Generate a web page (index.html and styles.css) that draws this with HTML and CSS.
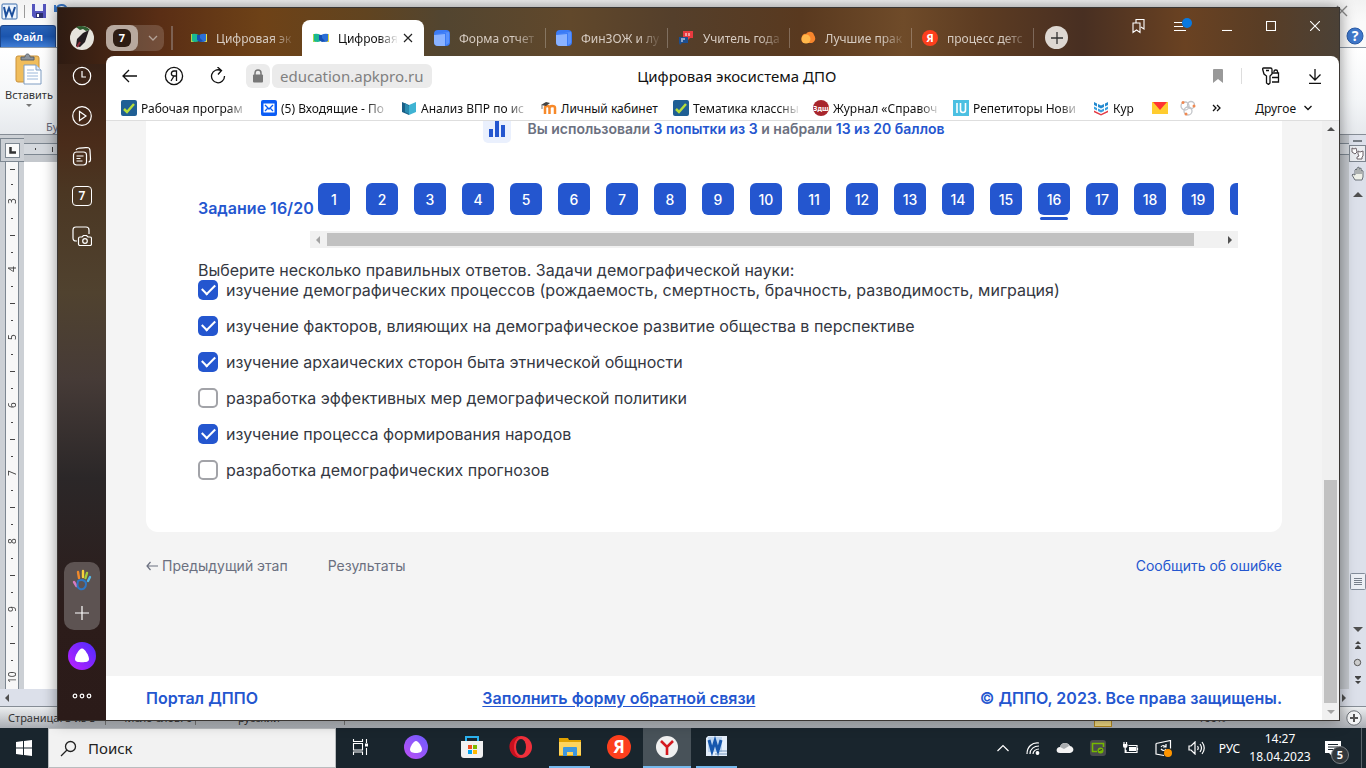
FILE: index.html
```html
<!DOCTYPE html>
<html lang="ru">
<head>
<meta charset="utf-8">
<title>Цифровая экосистема ДПО</title>
<link rel="stylesheet" href="styles.css">
</head>
<body>
<div class="desktop">
  <div class="workspace">
    <section class="word">
      <div class="word-title">
        <svg width="17" height="17" viewBox="0 0 17 17"><rect x="1" y="1" width="15" height="15" rx="1" fill="#eef5fd" stroke="#3a6cab"/><path d="M3 4l2 9 3-8 3 8 3-9" fill="none" stroke="#1c4f9c" stroke-width="2"/></svg>
        <i class="word-sep"></i>
        <svg width="16" height="16" viewBox="0 0 16 16"><path d="M1 1h14v14H3l-2-2z" fill="#5354bd"/><path d="M4 1h8v7H4z" fill="#eef0fa"/><path d="M5 10h7v5H5z" fill="#2c2f6d"/><path d="M6 11h2v3H6z" fill="#fff"/></svg>
        <svg class="word-undo" width="16" height="16" viewBox="0 0 16 16"><path d="M2 2v6h6M3 7c1-6 9-7 11-1" fill="none" stroke="#3a78c8" stroke-width="2"/></svg>
        <svg class="word-close" width="14" height="14" viewBox="0 0 14 14"><path d="M2 2l10 10M12 2L2 12" stroke="#888" stroke-width="1.4"/></svg>
      </div>
      <div class="word-tabs">
        <button class="word-file">Файл</button>
        <svg width="18" height="18" viewBox="0 0 18 18"><circle cx="9" cy="9" r="8" fill="#3f78cb" stroke="#2a5ba6"/><text x="9" y="14" text-anchor="middle" class="help-mark">?</text></svg>
      </div>
      <div class="word-ribbon">
        <button class="paste">
          <svg width="28" height="32" viewBox="0 0 28 32"><rect x="1" y="3" width="23" height="26" rx="2" fill="#f0bd5c" stroke="#c9913a"/><path d="M6 7V4h4c0-4 5-4 5 0h4v3z" fill="#8c949d" stroke="#59616b"/><path d="M9 12h12l5 5v14H9z" fill="#fff" stroke="#7f9dc2"/><path d="M21 12v5h5" fill="#dbe8f6" stroke="#7f9dc2"/><path d="M12 17h7M12 20h11M12 23h11M12 26h11" stroke="#9cb8db"/></svg>
          <span>Вставить</span>
          <i class="tri-down"></i>
        </button>
        <span class="ribbon-group">Буфер</span>
      </div>
      <div class="word-doc">
        <div class="doc-left">
          <div class="ruler-corner"><span><svg width="8" height="8" viewBox="0 0 8 8"><path d="M1.500 1v5.500H7" fill="none" stroke="#333" stroke-width="2.500"/></svg></span></div>
          <div class="ruler-v">
            <i class="ln first"></i><i class="dt"></i><b>3</b><i class="dt"></i><i class="ln"></i><i class="dt"></i><b>4</b><i class="dt"></i><i class="ln"></i><i class="dt"></i><b>5</b><i class="dt"></i><i class="ln"></i><i class="dt"></i><b>6</b><i class="dt"></i><i class="ln"></i><i class="dt"></i><b>7</b><i class="dt"></i><i class="ln"></i><i class="dt"></i><b>8</b><i class="dt"></i><i class="ln"></i><i class="dt"></i><b>9</b><i class="dt"></i><i class="ln"></i><i class="dt"></i><b>10</b>
          </div>
        </div>
        <div class="doc-main">
          <div class="ruler-h"><i class="mark-dot"></i><i class="mark-line"></i></div>
          <div class="paper"></div>
        </div>
        <div class="doc-scroll">
          <i class="split"></i>
          <svg class="boxed" width="17" height="17" viewBox="0 0 17 17"><rect x=".5" y=".5" width="16" height="16" fill="#e9ebef" stroke="#7d858f"/><path d="M3 3l2 1 2-1 1 4-2 2-3-2zM9 6l2 1 3-1v5l-1 1v2H8v-2l2-1-1-2z" fill="#fff" stroke="#6d6268"/></svg>
          <svg width="16" height="16" viewBox="0 0 16 16"><path d="M5 14L2 9l1-1 2 1V4l1-1 1 1V2l2-1v2l2-1v2l2 1v6l-1 3z" fill="#eef0e8" stroke="#6b7078"/><path d="M7 4v4M9 3v5M11 4v4" stroke="#6b7078"/></svg>
          <i class="tri-up big"></i>
          <span class="thumb-gap"></span>
          <svg width="16" height="17" viewBox="0 0 16 17"><rect x=".5" y=".5" width="15" height="16" rx="1" fill="#eceff5" stroke="#838c9a"/><path d="M4 5.500h8M4 7.500h8M4 9.500h8M4 11.500h8" stroke="#777f8b"/></svg>
          <span class="low-gap"></span>
          <i class="tri-down big"></i>
          <svg class="jump" width="8" height="8" viewBox="0 0 8 8"><path d="M4 0l3 3H1zM4 4l3 3H1zM1 7h6v1H1z" fill="#444"/></svg>
          <svg class="jump" width="9" height="9" viewBox="0 0 9 9"><circle cx="4.500" cy="4.500" r="3.200" fill="#ccc" stroke="#555"/></svg>
          <svg class="jump" width="8" height="8" viewBox="0 0 8 8"><path d="M1 0h6v1H1zM1 1h6L4 4zM1 5h6L4 8z" fill="#444"/></svg>
        </div>
      </div>
      <div class="word-hscroll"><i class="tri-left"></i><i class="tri-right"></i></div>
      <div class="word-status">
        <span class="st-page">Страница: 3 из 3</span><span class="st-words">Число слов: 0</span><span class="st-lang">русский</span>
        <span class="st-view"></span><span class="st-zoom">100%</span>
        <svg width="16" height="16" viewBox="0 0 16 16"><circle cx="8" cy="8" r="7.200" fill="#f4f5f6" stroke="#6d7278"/><path d="M8 4v8M4 8h8" stroke="#555" stroke-width="2"/></svg>
      </div>
    </section>

    <section class="browser">
      <nav class="side">
        <svg class="avatar" width="24" height="24" viewBox="0 0 24 24"><circle cx="12" cy="12" r="12" fill="#e6e3dc"/><path d="M6 1c5-2 11-1 14 3l-4 1-3-2-3 1z" fill="#2d5b2e"/><path d="M19 4l-4 12-5 5-4-1 1-7 6-6z" fill="#241c20"/><path d="M7 21l3-5" stroke="#8d2f3a" stroke-width="2"/></svg>
        <svg class="s1" width="20" height="20" viewBox="0 0 20 20"><circle cx="10" cy="10" r="8.700"/><path d="M10 5v6h4"/></svg>
        <svg class="s2" width="20" height="20" viewBox="0 0 20 20"><circle cx="10" cy="10" r="9.300"/><path d="M7.500 5.500v9l6.500-4.500z"/></svg>
        <svg class="s3" width="20" height="20" viewBox="0 0 20 20"><rect x="1.500" y="6" width="13" height="13" rx="3"/><path d="M4 4c1-2 3-2 11-2.500 2 0 3 1 3 3L18.500 13c0 2-1 3-2 3M4.500 10h7M4.500 12.500h4M4.500 15h6"/></svg>
        <span class="side-count">7</span>
        <svg class="s5" width="20" height="20" viewBox="0 0 20 20"><path d="M5 15H4c-2 0-3-1-3-3V4c0-2 1-3 3-3h10c2 0 3 1 3 3v4"/><path d="M8 11h2l1.500-1.500h3L16 11h2c1 0 1.500.5 1.500 1.500V18c0 1-.5 1.500-1.500 1.500H8c-1 0-1.500-.5-1.500-1.500v-5.500C6.500 11.500 7 11 8 11z"/><circle cx="13" cy="15" r="2.300"/></svg>
        <span class="side-space"></span>
        <div class="side-group">
          <svg width="20" height="22" viewBox="0 0 20 22"><g stroke-width="2.400" stroke-linecap="round" fill="none"><path d="M2 13l2.500 4" stroke="#d77bc0"/><path d="M6 3l1 6" stroke="#f08a2c"/><path d="M11 2v6" stroke="#f7d23c"/><path d="M15 4l-1.500 5" stroke="#a6ce39"/><path d="M18 8l-2 4" stroke="#54b9e8"/><path d="M6 12c3-2 8-1 8 3s-3 6-6 5-3-4-2-8z" stroke="#2f77c4" stroke-width="2"/></g></svg>
          <svg width="16" height="16" viewBox="0 0 16 16"><path d="M8 1v14M1 8h14"/></svg>
        </div>
        <svg class="alice" width="28" height="28" viewBox="0 0 28 28"><defs><linearGradient id="al" x1="0" y1="1" x2="1" y2="0"><stop offset="0" stop-color="#c020ff"/><stop offset="1" stop-color="#4a2cff"/></linearGradient></defs><circle cx="14" cy="14" r="14" fill="url(#al)" stroke="none"/><path d="M14 6.500c3 0 7 7.500 7 10.500s-3 3.200-7 3.200S7 20 7 17s4-10.500 7-10.500z" fill="#fff" stroke="none"/></svg>
        <svg class="dots" width="20" height="8" viewBox="0 0 20 8"><circle cx="3" cy="4" r="1.800"/><circle cx="10" cy="4" r="1.800"/><circle cx="17" cy="4" r="1.800"/></svg>
      </nav>

      <div class="main">
        <header class="tabstrip">
          <button class="tabgroup"><span><b>7</b></span><svg width="10" height="6" viewBox="0 0 10 6"><path d="M1 1l4 4 4-4"/></svg></button>
          <i class="strip-sep"></i>
          <div class="tabs">
            <a class="tab plain" href="#"><svg width="16" height="16" viewBox="0 0 16 16"><path d="M0 4h3v8H0z" fill="#a9d94a"/><path d="M13 4h3v8h-3z" fill="#e0dc4a"/><path d="M1 4q3-1 7 1v6q-4 2-7 0z" fill="#19b893"/><path d="M15 4q-3-1-7 1v6q4 2 7 0z" fill="#2b6fd6"/><path d="M6 5l3 0v3l3 3-3 1-3-2z" fill="#164fb5"/></svg><span>Цифровая эк</span></a>
            <a class="tab active" href="#"><svg width="16" height="16" viewBox="0 0 16 16"><path d="M0 4h3v8H0z" fill="#a9d94a"/><path d="M13 4h3v8h-3z" fill="#e0dc4a"/><path d="M1 4q3-1 7 1v6q-4 2-7 0z" fill="#19b893"/><path d="M15 4q-3-1-7 1v6q4 2 7 0z" fill="#2b6fd6"/><path d="M6 5l3 0v3l3 3-3 1-3-2z" fill="#164fb5"/></svg><span>Цифровая</span><svg width="10" height="10" viewBox="0 0 10 10"><path d="M1 1l8 8M9 1L1 9" stroke="#222" stroke-width="1.200"/></svg></a>
            <a class="tab" href="#"><svg width="16" height="16" viewBox="0 0 16 16"><rect width="16" height="16" rx="4" fill="#3b7bf6"/><path d="M0 5l11-1v12H4q-4 0-4-4z" fill="#8ab2ff"/><path d="M1 4l11-1v12l3-2V2z" fill="#5a92fb"/></svg><span>Форма отчет</span></a>
            <a class="tab" href="#"><svg width="16" height="16" viewBox="0 0 16 16"><rect width="16" height="16" rx="4" fill="#3b7bf6"/><path d="M0 5l11-1v12H4q-4 0-4-4z" fill="#8ab2ff"/><path d="M1 4l11-1v12l3-2V2z" fill="#5a92fb"/></svg><span>ФинЗОЖ и лу</span></a>
            <a class="tab" href="#"><svg width="16" height="16" viewBox="0 0 16 16"><path d="M5 1h10v7h-3l-2 2V8H5z" fill="#e93a3f"/><path d="M1 7h9v6H4l-2 2-1-2z" fill="#1d4f91"/><path d="M8 3v3M11 3v3M3 9h4M3 11h2" stroke="#fff"/></svg><span>Учитель года</span></a>
            <a class="tab" href="#"><svg width="16" height="16" viewBox="0 0 16 16"><path d="M2 12C0 6 4 3 6 4c2-3 7-3 8 1 3 4 0 8-3 8H4z" fill="#f7852c"/><circle cx="6" cy="9" r="4.500" fill="#ffb84b"/></svg><span>Лучшие прак</span></a>
            <a class="tab" href="#"><svg width="16" height="16" viewBox="0 0 16 16"><circle cx="8" cy="8" r="8" fill="#fc3f1d"/><text x="8" y="12" text-anchor="middle" class="ya-mark">Я</text></svg><span>процесс детс</span></a>
          </div>
          <button class="newtab" aria-label="Новая вкладка"><svg width="12" height="12" viewBox="0 0 12 12"><path d="M6 0v12M0 6h12" stroke="#333" stroke-width="1.300"/></svg></button>
          <div class="winctl">
            <button aria-label="Закладки"><svg width="14" height="16" viewBox="0 0 14 16"><path d="M1 5h7v9.500L4.500 12 1 14.500zM4 5V1.500h8V11l-3-2"/></svg></button>
            <button aria-label="Меню"><svg width="20" height="18" viewBox="0 0 20 18"><path d="M1 5.500h8M1 9.500h9M1 13.500h12"/><circle cx="14" cy="6" r="5" fill="#0a79df" stroke="none"/></svg></button>
            <button aria-label="Свернуть"><svg width="10" height="10" viewBox="0 0 10 10"><path d="M0 9.500h10"/></svg></button>
            <button aria-label="Развернуть"><svg width="10" height="10" viewBox="0 0 10 10"><path d="M.5.500h9v9h-9z"/></svg></button>
            <button aria-label="Закрыть"><svg width="10" height="10" viewBox="0 0 10 10"><path d="M0 0l10 10M10 0L0 10"/></svg></button>
          </div>
        </header>

        <div class="sheet">
          <div class="toolbar">
            <button aria-label="Назад"><svg width="16" height="14" viewBox="0 0 16 14"><path d="M7 1L1 7l6 6M1 7h14"/></svg></button>
            <button aria-label="Яндекс"><svg width="20" height="20" viewBox="0 0 20 20"><circle cx="10" cy="10" r="8.600"/><path d="M12.500 15V5H10C6.500 5 6.500 10 10 10h2.500M10 10l-3 5"/></svg></button>
            <button aria-label="Обновить"><svg width="18" height="18" viewBox="0 0 18 18"><path d="M12 3.500A6.500 6.500 0 1 0 15.500 9M8.500 0L12.500 3.500 9 7.500"/></svg></button>
            <span class="lock"><svg width="12" height="14" viewBox="0 0 12 14"><path d="M3 6V4q0-3 3-3t3 3v2" fill="none" stroke="#777" stroke-width="1.500"/><rect x="1" y="5.500" width="10" height="8" rx="1" fill="#777" stroke="none"/></svg></span>
            <span class="url">education.apkpro.ru</span>
            <span class="page-title">Цифровая экосистема ДПО</span>
            <button class="narrow" aria-label="В закладки"><svg width="10" height="14" viewBox="0 0 10 14"><path d="M1 0h8q1 0 1 1v13l-5-4-5 4V1q0-1 1-1z" fill="#999" stroke="none"/></svg></button>
            <i class="tool-sep"></i>
            <button class="key" aria-label="Пароли"><svg width="18" height="18" viewBox="0 0 18 18"><path d="M1.500 1h7q1.500 0 1.500 1.500V7L8 9v7l-1.500 1.500L4.500 16V9L2 7 .700 2.500Q.500 1 1.500 1zM4 3.500h3M12 5V4.500q0-1.500 1.500-1.500h.5q1.500 0 1.500 1.500V6M10 6h6.500v9H10M10 10.500h6.500"/></svg></button>
            <button aria-label="Загрузки"><svg width="14" height="16" viewBox="0 0 14 16"><path d="M7 1v10M1.500 6.500L7 12l5.500-5.500M1 15.300h12"/></svg></button>
          </div>
          <div class="bookmarks">
            <a href="#" class="bm"><svg width="16" height="16" viewBox="0 0 16 16"><rect width="16" height="16" rx="2" fill="#1f5f94"/><path d="M3 9l3 3 7-8" fill="none" stroke="#b5dd3c" stroke-width="2.500"/></svg><span>Рабочая програм</span></a>
            <a href="#" class="bm"><svg width="16" height="16" viewBox="0 0 16 16"><rect width="16" height="16" rx="2" fill="#0a5cf5"/><rect x="2.500" y="3.500" width="11" height="9" fill="#fff"/><path d="M4 5l4 4 4-4M4 11l2.500-2.500M12 11L9.500 8.500" fill="none" stroke="#0a5cf5" stroke-width="1.300"/></svg><span>(5) Входящие - По</span></a>
            <a href="#" class="bm"><svg width="16" height="16" viewBox="0 0 16 16"><path d="M1 2l7 3v10l-7-3z" fill="#1a5f86"/><path d="M15 2L8 5v10l7-3z" fill="#3fb3d3"/><path d="M4 3l4 3v8l-4-2z" fill="#2a8bb0"/></svg><span>Анализ ВПР по ис</span></a>
            <a href="#" class="bm short"><svg width="16" height="16" viewBox="0 0 16 16"><path d="M4 14V8q0-2 2.200-2T8.500 8v6M8.500 14V8q0-2 2.800-2T14 8v6" fill="none" stroke="#f7892a" stroke-width="2.500"/><path d="M0 5l5-3 4 1-4 3z" fill="#444"/><path d="M1 5v4" stroke="#777"/></svg><span>Личный кабинет</span></a>
            <a href="#" class="bm"><svg width="16" height="16" viewBox="0 0 16 16"><rect width="16" height="16" rx="2" fill="#1f5f94"/><path d="M3 9l3 3 7-8" fill="none" stroke="#b5dd3c" stroke-width="2.500"/></svg><span>Тематика классны</span></a>
            <a href="#" class="bm"><svg width="16" height="16" viewBox="0 0 16 16"><circle cx="8" cy="8" r="8" fill="#a8262d"/><text x="8" y="11" text-anchor="middle" class="zd-mark">Здш</text></svg><span>Журнал «Справоч</span></a>
            <a href="#" class="bm"><svg width="16" height="16" viewBox="0 0 16 16"><rect width="16" height="16" fill="#4cc0e2"/><path d="M4 3v10M7.500 3v7q0 2.500 2.500 2.500t2.500-2.500V3" fill="none" stroke="#fff" stroke-width="1.600"/></svg><span>Репетиторы Нови</span></a>
            <a href="#" class="bm tiny"><svg width="16" height="16" viewBox="0 0 16 16"><path d="M1 2l3 1.500 4 2 4-2L15 2v3l-7 3.500L1 5z" fill="#2389cf"/><path d="M1 6.500L8 10l7-3.500V9l-7 3.500L1 9z" fill="#3aa0e0"/><path d="M1 10.500L8 14l7-3.500v1.800L8 15.500l-7-3.200z" fill="#e33a45"/><path d="M4.500 2v9M11.500 2v9" stroke="#fff"/></svg><span>Кур</span></a>
            <a href="#" class="bm icon" aria-label="Почта"><svg width="16" height="16" viewBox="0 0 16 16"><path d="M0 2h16v12H0z" fill="#ffcc2f"/><path d="M1 2h14L8 10z" fill="#f33"/></svg></a>
            <a href="#" class="bm icon" aria-label="Сеть"><svg width="16" height="16" viewBox="0 0 16 16"><g fill="none" stroke="#c3c5c9" stroke-width="1.300"><circle cx="5" cy="6" r="4"/><circle cx="11" cy="5" r="3.500"/><circle cx="8" cy="11" r="4"/></g><circle cx="3" cy="2.500" r="1.500" fill="#f08850"/><circle cx="14" cy="6" r="1.500" fill="#f08850"/><circle cx="6" cy="14" r="1.500" fill="#f08850"/></svg></a>
            <button class="more" aria-label="Ещё"><svg width="9" height="8" viewBox="0 0 9 8"><path d="M1 1l3 3-3 3M5 1l3 3-3 3"/></svg></button>
            <button class="other">Другое<svg width="8" height="6" viewBox="0 0 8 6"><path d="M.5 1L4 4.500 7.500 1"/></svg></button>
          </div>

          <div class="viewport">
            <div class="page">
              <main class="card">
                <div class="score">
                  <svg width="28" height="28" viewBox="0 0 28 28"><rect width="28" height="28" rx="5" fill="#eaf0fd"/><path d="M6 14h4v8H6zM12 6h4v16h-4zM18 10h4v12h-4z" fill="#2456cf"/></svg>
                  <p>Вы использовали <b>3 попытки из 3</b> и набрали <b>13 из 20 баллов</b></p>
                </div>
                <div class="tasks">
                  <strong class="task-label">Задание 16/20</strong>
                  <div class="task-scroll">
                    <div class="task-list">
                      <button>1</button><button>2</button><button>3</button><button>4</button><button>5</button><button>6</button><button>7</button><button>8</button><button>9</button><button>10</button><button>11</button><button>12</button><button>13</button><button>14</button><button>15</button><button class="current">16</button><button>17</button><button>18</button><button>19</button><button aria-label="20"></button>
                    </div>
                    <div class="hbar"><i class="tri-left dim"></i><div class="hbar-track"><span></span></div><i class="tri-right"></i></div>
                  </div>
                </div>
                <form class="quiz">
                  <p>Выберите несколько правильных ответов. Задачи демографической науки:</p>
                  <label><input type="checkbox" checked><span>изучение демографических процессов (рождаемость, смертность, брачность, разводимость, миграция)</span></label>
                  <label><input type="checkbox" checked><span>изучение факторов, влияющих на демографическое развитие общества в перспективе</span></label>
                  <label><input type="checkbox" checked><span>изучение архаических сторон быта этнической общности</span></label>
                  <label><input type="checkbox"><span>разработка эффективных мер демографической политики</span></label>
                  <label><input type="checkbox" checked><span>изучение процесса формирования народов</span></label>
                  <label><input type="checkbox"><span>разработка демографических прогнозов</span></label>
                </form>
              </main>
              <nav class="steps">
                <a href="#"><svg width="12" height="10" viewBox="0 0 12 10"><path d="M4.500 1L1 5l3.500 4M1 5h11" fill="none" stroke="#6b7080" stroke-width="1.200"/></svg>Предыдущий этап</a>
                <a href="#">Результаты</a>
                <a href="#" class="report">Сообщить об ошибке</a>
              </nav>
              <footer class="foot">
                <a href="#">Портал ДППО</a>
                <a href="#" class="under">Заполнить форму обратной связи</a>
                <span>© ДППО, 2023. Все права защищены.</span>
              </footer>
            </div>
            <div class="vbar"><i class="tri-up"></i><div class="vbar-track"><span></span></div><i class="tri-down dim"></i></div>
          </div>
        </div>
      </div>
    </section>
  </div>

  <footer class="taskbar">
    <button class="start" aria-label="Пуск"><svg width="16" height="16" viewBox="0 0 16 16"><path d="M0 2l7-1v6.500H0zM8 1l8-1v7.500H8zM0 8.500h7V15l-7-1zM8 8.500h8V16l-8-1z" fill="#fff"/></svg></button>
    <label class="search"><svg width="17" height="17" viewBox="0 0 17 17"><circle cx="10.500" cy="6.500" r="5" fill="none" stroke="#222" stroke-width="1.300"/><path d="M7 10l-6 6" stroke="#222" stroke-width="1.300"/></svg><input type="text" placeholder="Поиск" aria-label="Поиск"></label>
    <button class="app" aria-label="Представление задач"><svg width="17" height="16" viewBox="0 0 17 16"><path d="M1.500 4.500h9v6.500h-9zM1.500 0v2.500h9V0M1.500 16v-3h9v3M14.500 0v4M14.500 9v7" fill="none" stroke="#fff" stroke-width="1.100"/><path d="M13 4.500h3v3h-3z" fill="#fff"/></svg></button>
    <button class="app wide" aria-label="Алиса"><svg width="24" height="24" viewBox="0 0 24 24"><defs><linearGradient id="a2" x1="0" y1="1" x2="1" y2="0"><stop offset="0" stop-color="#c050f5"/><stop offset="1" stop-color="#6a5cff"/></linearGradient></defs><circle cx="12" cy="12" r="12" fill="url(#a2)"/><path d="M12 6c2.500 0 6 6 6 8.500S15.500 18 12 18s-6-1-6-3.500S9.500 6 12 6z" fill="#fff"/></svg></button>
    <button class="app" aria-label="Магазин"><svg width="24" height="24" viewBox="0 0 24 24"><path d="M6 6V2h12v4" fill="none" stroke="#2cb2ee" stroke-width="2"/><path d="M1 6h22v14q0 3-3 3H4q-3 0-3-3z" fill="#f1f1f1"/><path d="M8 10h4v4H8z" fill="#f25022"/><path d="M13 10h4v4h-4z" fill="#7fba00"/><path d="M8 15h4v4H8z" fill="#00a4ef"/><path d="M13 15h4v4h-4z" fill="#ffb900"/></svg></button>
    <button class="app" aria-label="Opera"><svg width="24" height="24" viewBox="0 0 24 24"><ellipse cx="12" cy="12" rx="11" ry="11" fill="#f0303b"/><path d="M4 4a11 11 0 0 0 8 19c-5-2-7-6-7-11S7 3 12 1C9 1 6 2 4 4z" fill="#c8101e"/><ellipse cx="12" cy="12" rx="5" ry="8" fill="#19242c"/></svg></button>
    <button class="app open" aria-label="Проводник"><svg width="22" height="20" viewBox="0 0 22 20"><path d="M0 1h9l1 2h12v16H0z" fill="#e0a100"/><path d="M0 5h22v13H0z" fill="#ffd45c"/><path d="M4 19v-8q0-1 1-1h12q1 0 1 1v8h-4v-4H8v4z" fill="#3f97dc"/></svg></button>
    <button class="app" aria-label="Яндекс"><svg width="24" height="24" viewBox="0 0 24 24"><circle cx="12" cy="12" r="12" fill="#fc3f1d"/><text x="12" y="18" text-anchor="middle" class="ya-big">Я</text></svg></button>
    <button class="app open focus" aria-label="Браузер"><svg width="24" height="24" viewBox="0 0 24 24"><circle cx="12" cy="12" r="11" fill="#f0f0f0"/><path d="M6 6l6 6 6-6M12 12v8" fill="none" stroke="#d4181f" stroke-width="2.600"/></svg></button>
    <button class="app open" aria-label="Word"><svg width="24" height="24" viewBox="0 0 24 24"><path d="M3 1h19v20H1V3z" fill="#e4eefa"/><path d="M3 2h14v15H3z" fill="#bdd5f0"/><path d="M4 5l3 11 3-10 3 10 3-11" fill="none" stroke="#1657ad" stroke-width="3"/><path d="M10 19h12M14 16h8" stroke="#7595ba"/></svg></button>
    <div class="tray">
      <svg width="14" height="8" viewBox="0 0 14 8"><path d="M1.500 7L7 1.500 12.500 7"/></svg>
      <svg width="14" height="14" viewBox="0 0 14 14"><path d="M1 13C1 6 6 1 13 2M4 13c0-5 4-8 9-8M7 13c0-3 3-5 6-5"/><circle cx="11.500" cy="12" r="1.300" fill="#fff"/></svg>
      <svg width="18" height="12" viewBox="0 0 18 12"><path d="M4 11c-5 0-4-6 0-6 1-5 8-5 10-1 5 1 4 7 0 7z" fill="#f3f3f3" stroke="none"/><path d="M4 5c1-5 8-5 9-1L8 7z" fill="#a9adb0" stroke="none"/></svg>
      <svg width="16" height="16" viewBox="0 0 16 16"><rect width="16" height="16" rx="3" fill="#494b4d" stroke="none"/><path d="M7 11.500H2.500v-8h11V7" stroke="#76b900" stroke-width="1.600"/><circle cx="10.500" cy="10.500" r="3" fill="#76b900" stroke="none"/><path d="M9 10.500l3-1" stroke="#333"/></svg>
      <svg width="17" height="12" viewBox="0 0 17 12"><path d="M6.500 3.500h8.500v7H4V8M2 0v2M4.500 0v2M3.200 6v5M15.500 6v2"/><path d="M1 2h4.500v2q0 2-2.300 2T1 4zM7 5h7v4H7z" fill="#fff" stroke="none"/></svg>
      <svg width="17" height="17" viewBox="0 0 17 17"><path d="M1 3.500l14.500-3v8M1 3.500V14l8 1.500M6 7q2-3 5 0M11 4v3H8M11 9q-2 3-5 0"/><circle cx="13" cy="13" r="4" fill="#ff9500" stroke="none"/></svg>
      <svg width="17" height="14" viewBox="0 0 17 14"><path d="M1 5h2l4-4v12L3 9H1zM9.500 5q1.500 2 0 4M12 3q3 4 0 8M14 1q4.500 6 0 12"/></svg>
    </div>
    <span class="lang">РУС</span>
    <div class="clock"><span>14:27</span><span>18.04.2023</span></div>
    <div class="notif"><svg width="17" height="15" viewBox="0 0 17 15"><path d="M0 0h16v12H7v3l-3-3H0z" fill="#fff"/><path d="M3 3.500h10M3 6h10M3 8.500h6" stroke="#19242c"/></svg><b>5</b></div>
  </footer>
</div>
</body>
</html>
```

FILE: styles.css
```css
* { box-sizing: border-box; }
body { margin: 0; font-family: "Noto Sans", "Open Sans", sans-serif; font-size: 12px; color: #111; }
button { font: inherit; color: inherit; border: 0; padding: 0; background: none; }
a { color: inherit; text-decoration: none; }
p { margin: 0; }
svg { flex: none; display: block; }

.desktop { display: flex; flex-direction: column; height: 100vh; overflow: hidden; }
.workspace { position: relative; flex: 1; min-height: 0; }

/* small arrows shared by the scrollbars */
.tri-up, .tri-down, .tri-left, .tri-right { flex: none; border: 4px solid transparent; width: 0; height: 0; }
.tri-up { border-top: 0; border-bottom-color: #505050; }
.tri-down { border-bottom: 0; border-top-color: #505050; }
.tri-left { border-left: 0; border-right-color: #505050; }
.tri-right { border-right: 0; border-left-color: #505050; }
.tri-down.dim { border-top-color: #a3a3a3; }
.tri-left.dim { border-right-color: #a3a3a3; }
.tri-up.big { border-width: 0 5px 5px; }
.tri-down.big { border-width: 5px 5px 0; }

/* word processor */
.word { display: flex; flex-direction: column; height: 100%; background: #ccd0d5; }
.word-title { display: flex; align-items: center; gap: 4px; height: 22px; background: linear-gradient(#f2f2f2, #fafafa); padding: 0 1px; }
.word-sep { width: 1px; height: 13px; margin: 0 2px; background: #999; }
.word-undo { margin-left: 2px; }
.word-close { margin-left: auto; margin-right: 16px; }
.word-tabs { display: flex; justify-content: space-between; align-items: center; height: 26px; background: #fafafa; border-bottom: 1px solid #8b97a5; padding: 3px 2px 0 0; }
.word-file { align-self: stretch; width: 56px; border-radius: 3px 3px 0 0; color: #fff; background: linear-gradient(#2a63b8, #1b55ae 50%, #3f7dd6); border: 1px solid #1c468c; border-bottom: 0; font-size: 11px; font-weight: 600; }
.help-mark { font: bold 14px "Noto Sans", sans-serif; fill: #fff; }
.word-ribbon { display: flex; flex-direction: column; justify-content: space-between; height: 87px; background: linear-gradient(#fff, #f4f6f8 60%, #e6e9ed); border-bottom: 1px solid #868d96; padding: 5px 0 0; }
.paste { display: flex; flex-direction: column; align-items: center; gap: 2px; width: 58px; font-size: 11px; color: #333; }
.paste .tri-down { border-top-color: #777; border-width: 3px 3px 0; }
.ribbon-group { padding-left: 46px; font-size: 11px; color: #667; }
.word-doc { display: flex; flex: 1; min-height: 0; background: #b5babf; }
.doc-left { display: flex; flex-direction: column; width: 24px; background: #ccd0d5; padding-top: 3px; }
.ruler-corner { flex: none; display: grid; place-items: center; height: 24px; border: 1px solid #7d8791; margin-right: -1px; }
.ruler-corner span { display: grid; place-items: center; width: 15px; height: 15px; background: #fafafa; border: 1px solid #7d8791; }
.ruler-v { display: flex; flex-direction: column; flex: 1; width: 14px; margin-left: 5px; background: #f7f7f7; border: solid #7d8791; border-width: 0 1px; overflow: hidden; }
.ruler-v > * { flex: none; height: 17px; display: grid; place-items: center; }
.ruler-v b { font-weight: 400; font-size: 10px; color: #444; writing-mode: vertical-rl; transform: rotate(180deg); line-height: 12px; }
.ruler-v .first { height: 14px; }
.ln::before { content: ""; width: 5px; height: 1px; background: #444; }
.dt::before { content: ""; width: 2px; height: 1px; background: #444; }
.doc-main { display: flex; flex-direction: column; flex: 1; padding-top: 8px; background: #c4c8cd; }
.ruler-h { display: flex; align-items: center; gap: 16px; height: 12px; padding-left: 11px; background: #d4d8dd; border: solid #7d8791; border-width: 1px 0; }
.mark-dot { width: 1px; height: 2px; background: #444; }
.mark-line { width: 1px; height: 5px; background: #444; }
.paper { flex: 1; margin-top: 7px; background: #fff; width: 60%; }
.doc-scroll { display: flex; flex-direction: column; align-items: center; width: 17px; background: #dce0ea; padding-top: 5px; gap: 4px; }
.doc-scroll .split { flex: none; width: 9px; height: 2px; background: #777d85; }
.doc-scroll .boxed { margin-top: -1px; }
.doc-scroll .tri-up { margin-top: 6px; }
.thumb-gap { flex: 1; }
.low-gap { flex: none; height: 29px; }
.doc-scroll .jump { margin-top: 5px; }
.doc-scroll .jump:last-child { margin-bottom: 5px; }
.word-hscroll { display: flex; align-items: center; justify-content: space-between; height: 17px; padding: 0 20px 0 5px; background: #dce0ea; }
.word-status { display: flex; align-items: center; height: 22px; padding: 0 4px 0 8px; background: linear-gradient(#eceef0, #a9adb3); border-top: 1px solid #868d96; font-size: 11px; color: #333; white-space: nowrap; }
.st-page { width: 97px; overflow: hidden; }
.st-words { width: 90px; padding-left: 14px; border-left: 1px solid #777; }
.st-lang { width: 150px; padding-left: 42px; border-left: 1px solid #777; border-right: 1px solid #777; }
.st-view { width: 18px; height: 18px; margin-left: auto; background: #f3dc85; border: 1px solid #b58a20; }
.st-zoom { padding: 0 120px 0 86px; }

/* browser window */
.browser {
  position: absolute; inset: 7px 26px 7px 57px; display: flex; border: 1px solid #3a3633; color: #fff;
  box-shadow: 0 0 14px rgba(0, 0, 0, .45);
  background: linear-gradient(#2c1b14, #4a2c1a 19%, #4b3723 26%, #50422f 40%, #463b37 52%, #2b2728 66%, #2c1c1a 86%, #2b1b19);
}
.side { z-index: 1; display: flex; flex-direction: column; align-items: center; width: 48px; padding: 18px 0 20px; }
.side svg { fill: none; stroke: #fff; stroke-width: 1.2; }
.side .avatar, .side .alice { stroke: none; }
.s1 { margin-top: 16px; }
.s2, .s3, .s5 { margin-top: 20px; }
.side-count { display: grid; place-items: center; width: 20px; height: 20px; margin-top: 20px; border: 1px solid #fff; border-radius: 4px; font-weight: 600; font-size: 12px; line-height: 18px; }
.side-space { flex: 1; }
.side-group { display: flex; flex-direction: column; align-items: center; justify-content: space-between; width: 36px; height: 68px; padding: 7px 0 9px; border-radius: 10px; background: #5d5352; }
.alice { margin: 12px 0 22px; }
.main { display: flex; flex-direction: column; flex: 1; min-width: 0; }

.tabstrip { display: flex; height: 56px; margin: 0 0 -8px -48px; padding: 0 0 8px 48px; background: linear-gradient(90deg, #2e1b12, #5a2e15 8%, #6e4217 16%, #614420 24%, #524530 30%, #61482b 40%, #543f2b 48%, #59391f 58%, #6f4b29 66%, #5d3c22 72%, #482f22 80%, #6a4222 88%, #593d25 94%, #4b4136); }
.tabgroup { display: flex; align-items: center; width: 58px; height: 26px; margin-top: 17px; border-radius: 8px; background: rgba(255, 255, 255, .16); }
.tabgroup span { display: grid; place-items: center; width: 32px; height: 26px; margin-right: 10px; border-radius: 8px; background: #b8a99f; }
.tabgroup b { width: 18px; height: 18px; border-radius: 6px; background: #2d1c13; font-size: 11px; line-height: 18px; }
.tabgroup svg { fill: none; stroke: #b3a398; stroke-width: 1.3; }
.strip-sep { width: 2px; height: 24px; margin: 18px 7px 0 7px; background: #7d6152; }
.tabs { display: flex; padding-top: 12px; font-size: 12px; }
.tab { display: flex; align-items: center; gap: 9px; width: 122px; padding: 0 6px 0 10px; color: #d6cbc1; white-space: nowrap; background: linear-gradient(rgba(255, 255, 255, .25), rgba(255, 255, 255, .25)) right / 1px 20px no-repeat; }
.tab.plain { padding-left: 11px; background: none; }
.tab span { flex: 1; overflow: hidden; mask-image: linear-gradient(90deg, #000 70%, transparent); }
.tab.active { background: #fff; color: #111; border-radius: 8px 8px 0 0; padding: 0 11px; gap: 5px; }
.tab.active span { padding-left: 4px; }
.ya-mark { font: bold 11px "Noto Sans", sans-serif; fill: #fff; }
.ya-big { font: bold 17px "Noto Sans", sans-serif; fill: #fff; }
.zd-mark { font: bold 7px "Noto Sans", sans-serif; fill: #fff; }
.newtab { display: grid; place-items: center; width: 23px; height: 23px; margin: 18px 0 0 11px; border-radius: 50%; background: #ded8d2; }
.winctl { display: flex; margin-left: auto; padding-right: 2px; }
.winctl button { display: grid; place-items: center; width: 44px; height: 36px; }
.winctl svg { fill: none; stroke: #fff; stroke-width: 1.1; }

.sheet { display: flex; flex-direction: column; flex: 1; min-height: 0; background: #fff; border-radius: 8px 8px 0 0; color: #111; overflow: hidden; }
.toolbar { display: flex; align-items: center; height: 40px; padding: 0 2px; }
.toolbar button { display: grid; place-items: center; width: 44px; height: 40px; }
.toolbar svg, .more svg, .other svg { fill: none; stroke: #111; stroke-width: 1.3; }
.lock, .url { display: grid; place-items: center; height: 24px; border-radius: 6px; background: #ebebeb; }
.lock { width: 24px; margin: 0 2px 0 6px; }
.url { padding: 0 8px; font-size: 15px; color: #808080; }
.page-title { flex: 1; padding-right: 164px; text-align: center; font-size: 15px; }
.toolbar .narrow { width: 24px; }
.tool-sep { width: 1px; height: 16px; margin: 0 7px 0 11px; background: #ddd; }
.bookmarks { display: flex; align-items: center; gap: 12px; height: 25px; padding: 0 27px 0 15px; border-bottom: 1px solid #dedede; white-space: nowrap; }
.bm { display: flex; align-items: center; gap: 4px; width: 128px; }
.bm span { flex: 1; overflow: hidden; mask-image: linear-gradient(90deg, #000 80%, transparent); }
.bm.short { width: 120px; }
.bm.short span { mask-image: none; }
.bm.tiny { width: 47px; }
.bm.icon { width: 16px; }
.more { width: 16px; display: grid; place-items: center; }
.other { display: flex; align-items: center; gap: 8px; margin-left: auto; }

/* page inside the browser */
.viewport { display: flex; flex: 1; min-height: 0; font-family: Inter, "Open Sans", sans-serif; }
.page { display: flex; flex-direction: column; flex: 1; min-width: 0; background: #f4f4f4; }
.card { margin: 0 40px; padding: 0 44px 52px 52px; background: #fff; border-radius: 0 0 12px 12px; }
.score { display: flex; justify-content: center; align-items: flex-end; gap: 16px; height: 22px; padding-right: 8px; overflow: hidden; font-size: 14px; line-height: 16px; font-weight: 600; color: #6b7080; }
.score p { align-self: flex-start; }
.score b { color: #2456cf; font-weight: 600; }
.tasks { display: flex; margin-top: 40px; }
.task-label { width: 112px; line-height: 50px; font-size: 16px; font-weight: 600; color: #2456cf; white-space: nowrap; }
.task-scroll { flex: 1; min-width: 0; }
.task-list { display: flex; gap: 16px; height: 48px; padding-left: 8px; overflow: hidden; }
.task-list button { position: relative; flex: none; width: 32px; height: 32px; border-radius: 6px; background: #2456cf; color: #fff; font-size: 14px; font-weight: 500; }
.task-list .current::after { content: ""; position: absolute; left: 2px; right: 2px; top: 34px; height: 3px; border-radius: 2px; background: #2456cf; }
.hbar { display: flex; align-items: center; gap: 7px; height: 17px; padding: 0 6px; background: #f1f1f1; }
.hbar-track { flex: 1; }
.hbar-track span { display: block; width: 97%; height: 13px; background: #c1c1c1; }
.quiz { display: flex; flex-direction: column; gap: 16px; margin-top: 12px; font-size: 16px; line-height: 20px; color: #343842; }
.quiz p { margin-bottom: -16px; }
.quiz label { display: flex; gap: 8px; }
.quiz input { appearance: none; flex: none; width: 20px; height: 20px; margin: 0; border: 2px solid #a2a3a8; border-radius: 5px; background: #fff; }
.quiz input:checked { border: 0; background: #2456cf; display: grid; place-items: center; }
.quiz input:checked::before { content: ""; width: 11px; height: 6px; margin-bottom: 4px; border: solid #fff; border-width: 0 0 2px 2px; transform: rotate(-45deg); }
.steps { display: flex; gap: 40px; margin: 24px 40px 0; font-size: 14px; line-height: 20px; color: #6b7080; }
.steps a { display: flex; align-items: center; gap: 4px; }
.steps .report { margin-left: auto; color: #2456cf; }
.foot { display: flex; justify-content: space-between; align-items: center; height: 44px; margin-top: auto; padding: 0 40px; background: #fff; color: #2456cf; font-size: 16px; font-weight: 600; }
.foot .under { text-decoration: underline; text-underline-offset: 2px; }
.vbar { display: flex; flex-direction: column; align-items: center; gap: 7px; width: 17px; padding: 6px 2px; background: #f0f0f0; }
.vbar-track { display: flex; flex-direction: column; justify-content: flex-end; flex: 1; width: 13px; }
.vbar-track span { height: 39.5%; background: #c1c1c1; }

/* taskbar */
.taskbar { display: flex; height: 40px; background: #19252d; color: #fff; }
.start { display: grid; place-items: center; width: 48px; }
.search { display: flex; align-items: center; gap: 9px; width: 288px; padding: 0 11px; background: #f2f2f2; border: 1px solid #b9bcbe; }
.search input { flex: 1; min-width: 0; border: 0; background: none; font: 15px "Noto Sans", sans-serif; }
.search input::placeholder { color: #222; opacity: 1; }
.app { display: grid; place-items: center; width: 49px; border-bottom: 2px solid transparent; }
.app.wide { width: 62px; }
.app.open { border-color: #76b9ed; width: 41px; margin: 0 4px; }
.app.focus { width: 48px; margin: 0 1px 0 0; background: #485259; }
.tray { display: flex; align-items: center; gap: 16px; margin-left: auto; }
.tray svg { fill: none; stroke: #fff; stroke-width: 1.2; }
.lang { align-self: center; width: 46px; padding-left: 3px; text-align: center; font-size: 12px; }
.clock { display: flex; flex-direction: column; align-items: center; justify-content: center; width: 58px; line-height: 18px; font-size: 12px; }
.notif { position: relative; display: grid; place-items: center; width: 53px; padding-right: 4px; border-right: 1px solid #59636a; margin-right: 4px; }
.notif b { position: absolute; left: 22px; top: 18px; width: 18px; height: 18px; border-radius: 50%; border: 1px solid #7a7f83; background: #33383c; text-align: center; font-size: 11px; line-height: 16px; }
```
